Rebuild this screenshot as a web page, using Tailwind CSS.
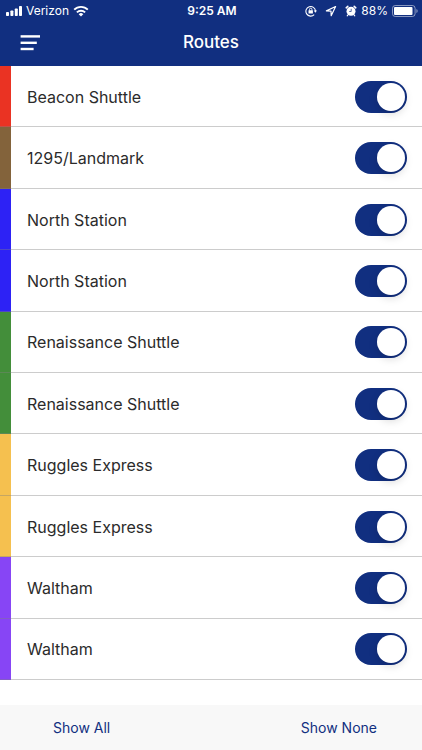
<!DOCTYPE html>
<html lang="en">
<head>
  <meta charset="UTF-8">
  <meta name="viewport" content="width=device-width, initial-scale=1.0">
  <title>Routes</title>
  <script src="https://cdn.jsdelivr.net/npm/@tailwindcss/browser@4"></script>
</head>
<body class="min-h-screen flex flex-col bg-white font-['Inter','Liberation_Sans',sans-serif] text-[#2b2b2b]">

  <header class="bg-[#112f80] text-white">
    <!-- Status bar -->
    <div class="grid grid-cols-3 items-center h-5 pt-0.5 pl-1.5 pr-1 text-xs">
      <div class="flex items-center gap-1">
        <svg class="w-4 h-2.5" viewBox="0 0 16 10" fill="currentColor">
          <rect x="0" y="6" width="3" height="4" rx="0.8"/>
          <rect x="4.4" y="4.4" width="3" height="5.6" rx="0.8"/>
          <rect x="8.8" y="2.4" width="3" height="7.6" rx="0.8"/>
          <rect x="13" y="0" width="3" height="10" rx="0.8"/>
        </svg>
        <span>Verizon</span>
        <svg class="w-4 h-3" viewBox="0 0 16 12" fill="none" stroke="currentColor" stroke-width="1.9">
          <path d="M1.2 4.7a9.6 9.6 0 0 1 13.6 0"/>
          <path d="M3.9 7.4a5.8 5.8 0 0 1 8.2 0"/>
          <path d="M8 11.6 5.7 9.2a3.3 3.3 0 0 1 4.6 0z" fill="currentColor" stroke="none"/>
        </svg>
      </div>
      <div class="text-center font-semibold">9:25 AM</div>
      <div class="flex items-center justify-end gap-1">
        <!-- Rotation lock -->
        <svg class="w-3 h-3 mr-1" viewBox="0 0 12 12" fill="none" stroke="currentColor">
          <path d="M9.2 9.6A4.8 4.8 0 1 1 10.5 6" stroke-width="1.1"/>
          <path d="M8.7 5.6h3.3l-1.6 2.2z" fill="currentColor" stroke="none"/>
          <rect x="3.5" y="5.2" width="4.4" height="3.4" rx="0.4" fill="currentColor" stroke="none"/>
          <path d="M4.5 5.5V4.4a1.2 1.2 0 0 1 2.4 0v1.1" stroke-width="0.9"/>
        </svg>
        <!-- Location -->
        <svg class="w-3 h-3 mr-1" viewBox="0 0 12 12" fill="none" stroke="currentColor" stroke-width="1.2" stroke-linejoin="round">
          <path d="M10.6 1.5 1.4 5.9l4.6.2.2 4.6z"/>
        </svg>
        <!-- Alarm -->
        <svg class="w-3 h-3" viewBox="0 0 12 12" fill="none" stroke="currentColor" stroke-linecap="round">
          <circle cx="6" cy="6.3" r="4.5" fill="currentColor" stroke="none"/>
          <path d="M1.2 2.8 2.8 1.4M10.8 2.8 9.2 1.4" stroke-width="1.6"/>
          <path d="m3 9.8-.8 1M9 9.8l.8 1" stroke-width="1.1"/>
          <path d="M6.2 4.2v2.3H4.6" stroke="#112f80" stroke-width="0.7"/>
        </svg>
        <span>88%</span>
        <svg class="w-[26px] h-3" viewBox="0 0 26 12" fill="none">
          <rect x="0.5" y="0.5" width="22.6" height="11" rx="2.8" stroke="white" stroke-opacity="0.5"/>
          <rect x="2" y="2" width="18.5" height="8" rx="1" fill="white"/>
          <path d="M24.4 4v4a2.2 2.2 0 0 0 0-4z" fill="white" fill-opacity="0.5"/>
        </svg>
      </div>
    </div>

    <!-- Title bar -->
    <div class="grid grid-cols-3 items-center h-[46px] px-5">
      <button type="button" aria-label="Menu" class="justify-self-start">
        <svg class="w-5 h-4" viewBox="0 0 20 16" fill="currentColor">
          <rect x="0.6" y="0.2" width="19.4" height="2.4"/>
          <rect x="0.6" y="6.6" width="16.2" height="2.4"/>
          <rect x="0.6" y="12.8" width="13" height="2.4"/>
        </svg>
      </button>
      <h1 class="text-center text-[17px] font-medium">Routes</h1>
    </div>
  </header>

  <main class="flex-1 flex flex-col pb-[25px]">
    <ul id="routeList" class="flex-1 flex flex-col"></ul>
  </main>

  <footer class="flex items-center justify-between h-[45px] bg-[#f8f8f8] px-[45px] text-sm text-[#112f80]">
    <button type="button" id="showAll" class="px-2">Show All</button>
    <button type="button" id="showNone">Show None</button>
  </footer>

  <script>
    const routes = [
      { name: 'Beacon Shuttle', color: 'bg-[#ea3323]' },
      { name: '1295/Landmark', color: 'bg-[#83633b]' },
      { name: 'North Station', color: 'bg-[#2d22f5]' },
      { name: 'North Station', color: 'bg-[#2d22f5]' },
      { name: 'Renaissance Shuttle', color: 'bg-[#438e3a]' },
      { name: 'Renaissance Shuttle', color: 'bg-[#438e3a]' },
      { name: 'Ruggles Express', color: 'bg-[#f5c04f]' },
      { name: 'Ruggles Express', color: 'bg-[#f5c04f]' },
      { name: 'Waltham', color: 'bg-[#8745f5]' },
      { name: 'Waltham', color: 'bg-[#8745f5]' }
    ];

    const routeList = document.getElementById('routeList');

    routes.forEach((route, i) => {
      const row = document.createElement('li');
      row.className = 'flex flex-1';
      row.innerHTML = `
        <span class="w-[11px] border-b border-[#808080]/40 ${route.color}"></span>
        <div class="flex flex-1 items-center justify-between border-b border-[#808080]/40 pt-px pl-4 pr-[15px]">
          <label for="route${i}" class="text-base">${route.name}</label>
          <input type="checkbox" id="route${i}" checked
            class="appearance-none flex items-center w-[52px] h-8 p-0.5 rounded-full bg-gray-300 checked:bg-[#112f80] checked:justify-end before:size-7 before:rounded-full before:bg-white before:shadow-[0_3px_8px_rgba(0,0,0,0.15)]">
        </div>
      `;
      routeList.appendChild(row);
    });

    function setAll(checked) {
      routeList.querySelectorAll('input').forEach(input => {
        input.checked = checked;
      });
    }

    document.getElementById('showAll').addEventListener('click', () => setAll(true));
    document.getElementById('showNone').addEventListener('click', () => setAll(false));
  </script>

</body>
</html>
